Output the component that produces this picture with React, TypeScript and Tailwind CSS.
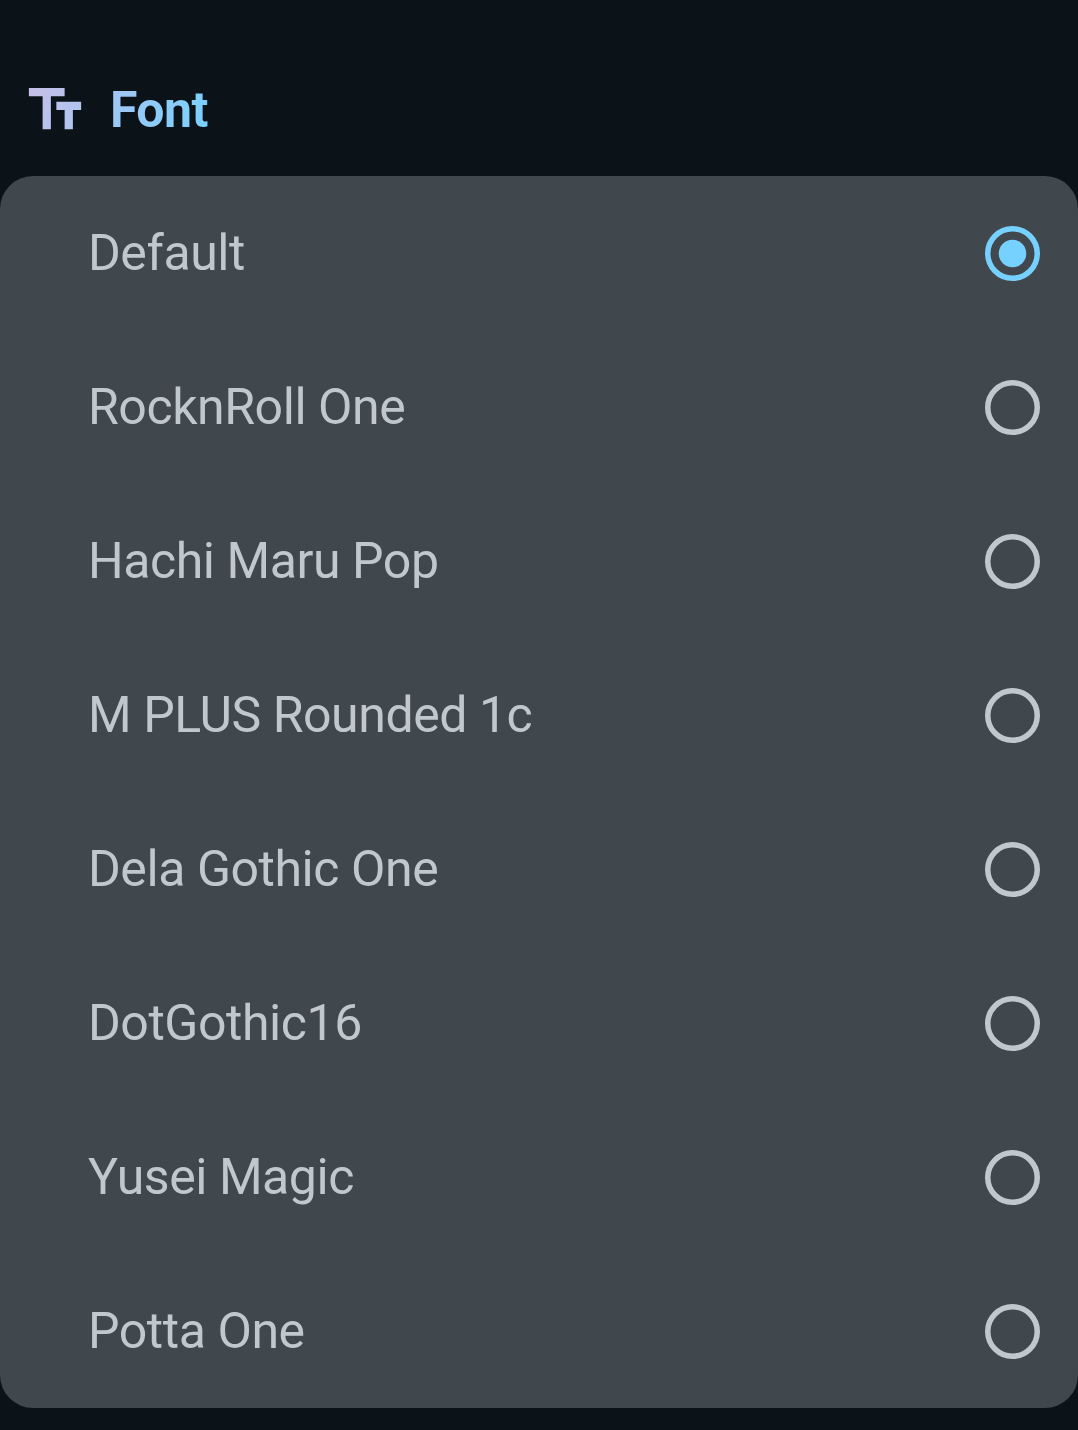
const fonts = ["Default", "RocknRoll One", "Hachi Maru Pop", "M PLUS Rounded 1c", "Dela Gothic One", "DotGothic16", "Yusei Magic", "Potta One"];

function Radio({ selected }: { selected: boolean }) {
  return (
    <svg width="55" height="55" viewBox="0 0 20 20" fill="none" className={selected ? "text-[#76d1ff]" : "text-[#c0c7cf]"} role="radio" aria-checked={selected}>
      <circle cx="10" cy="10" r="9" stroke="currentColor" strokeWidth="2" />
      {selected && <circle cx="10" cy="10" r="5" fill="currentColor" />}
    </svg>
  );
}

export default function App() {
  return (
    <main className="flex h-[1430px] w-[1078px] flex-col overflow-hidden bg-[#0c1318] font-['Roboto',sans-serif]">
      <header className="flex h-[176px] items-center gap-[22px] pt-[44px] pl-[22px]">
        <svg width="66" height="66" viewBox="0 0 24 24" aria-hidden="true">
          <defs>
            <linearGradient id="title" gradientUnits="userSpaceOnUse" x1="2.5" y1="4" x2="21.5" y2="19">
              <stop stopColor="#c6bfe8" />
              <stop offset="1" stopColor="#acc5f1" />
            </linearGradient>
          </defs>
          <path fill="url(#title)" d="M2.5 4v3h5v12h3V7h5V4h-13zm19 5h-9v3h3v7h3v-7h3V9z" />
        </svg>
        <h1 className="bg-linear-[110deg] from-[#a4c6f3] to-[#76d1ff] bg-clip-text text-[50px] leading-[58px] font-bold tracking-[-0.6px] text-transparent">Font</h1>
      </header>
      <ul className="rounded-[33px] bg-[#41484d]">
        {fonts.map((font, index) => (
          <li key={font} className="flex h-[154px] items-center justify-between pr-[38px] pl-[88px]">
            <span className="text-[50px] leading-[58px] tracking-[-0.44px] text-[#c0c7cf]">{font}</span>
            <Radio selected={index === 0} />
          </li>
        ))}
      </ul>
    </main>
  );
}
